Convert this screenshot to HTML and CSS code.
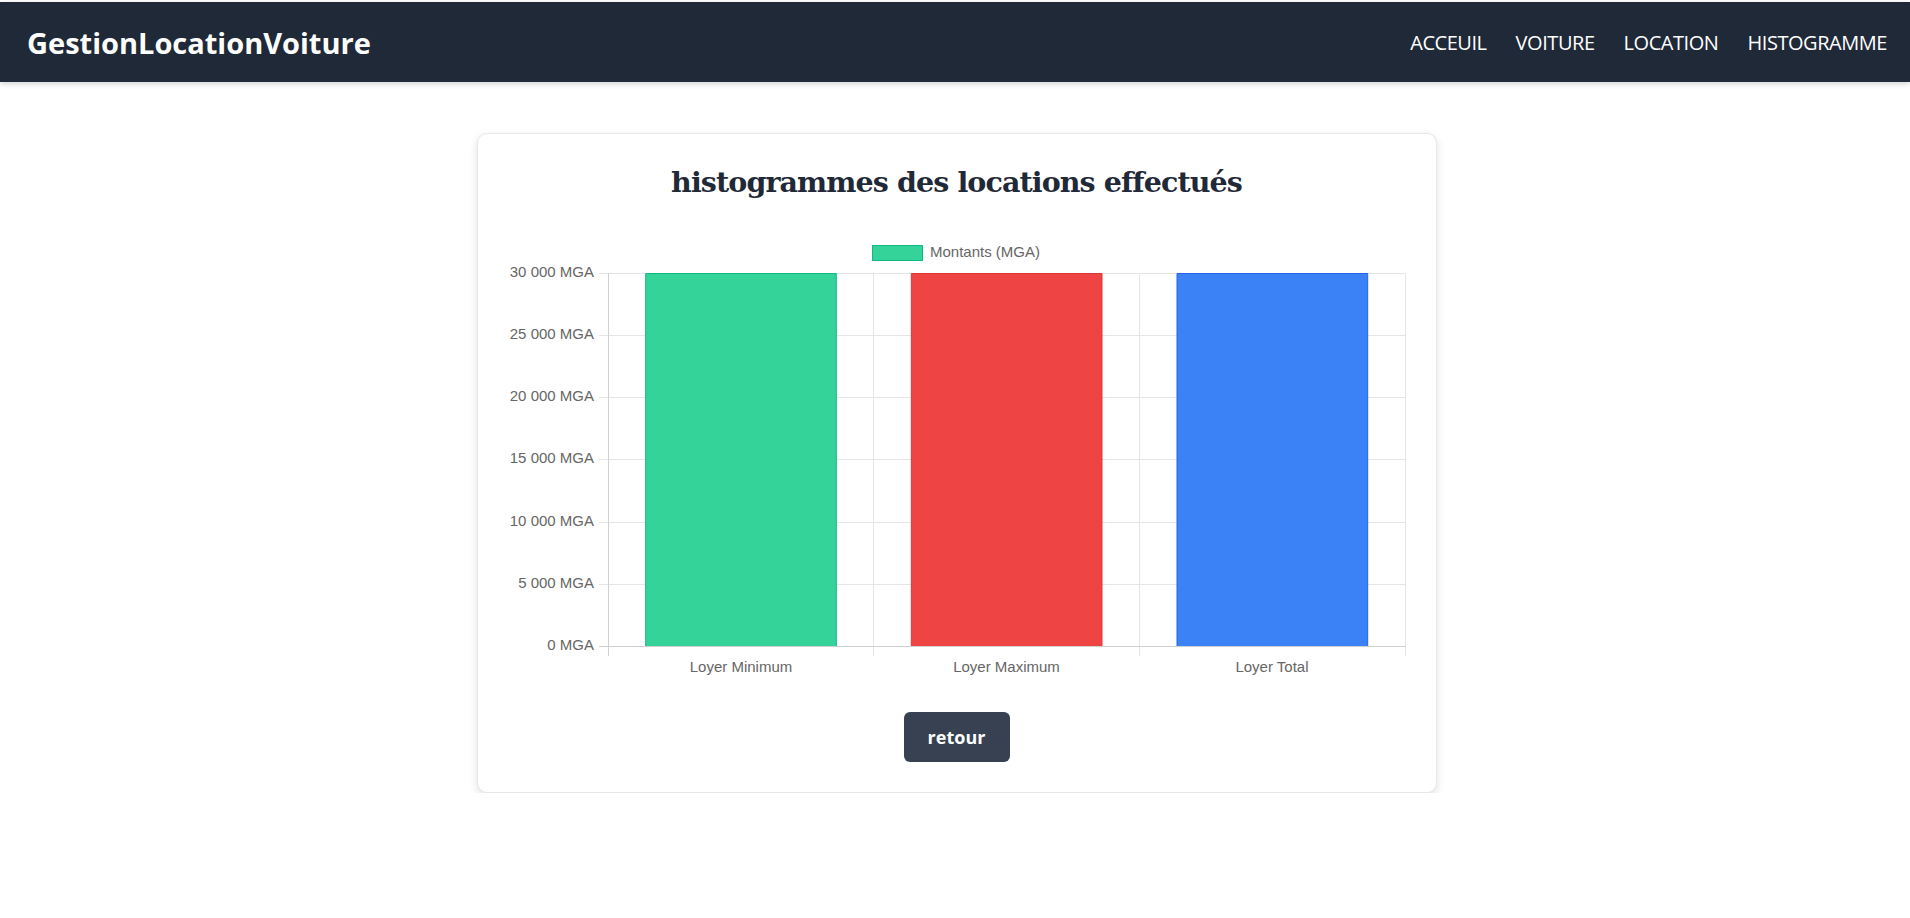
FILE: index.html
```html
<!DOCTYPE html>
<html lang="fr">
<head>
<meta charset="utf-8">
<title>GestionLocationVoiture</title>
<link rel="stylesheet" href="styles.css">
</head>
<body>
<header class="navbar">
  <div class="brand">GestionLocationVoiture</div>
  <nav class="nav-links">
    <a href="#" class="nav-link">ACCEUIL</a>
    <a href="#" class="nav-link">VOITURE</a>
    <a href="#" class="nav-link">LOCATION</a>
    <a href="#" class="nav-link">HISTOGRAMME</a>
  </nav>
</header>
<main class="main">
  <section class="card">
    <h2 class="card-title">histogrammes des locations effectués</h2>
    <div class="chart">
      <svg class="chart-svg" width="899" height="450" viewBox="0 0 899 450">
        <!-- legend -->
        <rect x="364.5" y="15.5" width="50" height="15" fill="#34d399" stroke="#10b981" stroke-width="1"/>
        <text class="chart-text" x="422" y="23" dominant-baseline="middle">Montants (MGA)</text>
        <!-- grid -->
        <g stroke="#e5e5e5" stroke-width="1">
          <line x1="91" y1="43.5" x2="898" y2="43.5"/>
          <line x1="91" y1="105.5" x2="898" y2="105.5"/>
          <line x1="91" y1="167.5" x2="898" y2="167.5"/>
          <line x1="91" y1="229.5" x2="898" y2="229.5"/>
          <line x1="91" y1="292.5" x2="898" y2="292.5"/>
          <line x1="91" y1="354.5" x2="898" y2="354.5"/>
          <line x1="365.5" y1="43" x2="365.5" y2="426"/>
          <line x1="631.5" y1="43" x2="631.5" y2="426"/>
          <line x1="897.5" y1="43" x2="897.5" y2="426"/>
        </g>
        <g stroke="#d0d0d0" stroke-width="1">
          <line x1="91" y1="416.5" x2="898" y2="416.5"/>
          <line x1="100.5" y1="43" x2="100.5" y2="426"/>
        </g>
        <!-- bars -->
        <path d="M137.7 416 V43.5 H328.3 V416" fill="#34d399" stroke="#10b981" stroke-width="1"/>
        <path d="M403.3 416 V43.5 H594 V416" fill="#ef4444" stroke="#dc3838" stroke-width="1"/>
        <path d="M669 416 V43.5 H859.7 V416" fill="#3b82f6" stroke="#2563eb" stroke-width="1"/>
        <!-- y labels -->
        <g class="chart-text" text-anchor="end" dominant-baseline="middle">
          <text x="86" y="43">30 000 MGA</text>
          <text x="86" y="105">25 000 MGA</text>
          <text x="86" y="167">20 000 MGA</text>
          <text x="86" y="229">15 000 MGA</text>
          <text x="86" y="292">10 000 MGA</text>
          <text x="86" y="354">5 000 MGA</text>
          <text x="86" y="416">0 MGA</text>
        </g>
        <!-- x labels -->
        <g class="chart-text" text-anchor="middle" dominant-baseline="middle">
          <text x="233" y="438">Loyer Minimum</text>
          <text x="498.5" y="438">Loyer Maximum</text>
          <text x="764" y="438">Loyer Total</text>
        </g>
      </svg>
    </div>
    <div class="actions">
      <a href="#" class="btn">retour</a>
    </div>
  </section>
</main>
</body>
</html>
```
FILE: styles.css
```css
* { box-sizing: border-box; }
html, body { margin: 0; padding: 0; background: #ffffff; }
body { font-family: "Open Sans", "Noto Sans", sans-serif; }

.navbar {
  margin-top: 2px;
  height: 80px;
  background: #1f2937;
  display: flex;
  align-items: center;
  justify-content: space-between;
  padding: 0 23px 0 27px;
  box-shadow: 0 2px 6px rgba(0, 0, 0, 0.18);
}
.brand {
  color: #ffffff;
  font-weight: 700;
  font-size: 29px;
  letter-spacing: 0;
}
.nav-links {
  display: flex;
  gap: 29px;
}
.nav-link {
  color: #ffffff;
  text-decoration: none;
  font-size: 20px;
  letter-spacing: -0.45px;
}

.main {
  display: flex;
  justify-content: center;
  padding: 51px 0 0 3px;
}
.card {
  width: 960px;
  background: #ffffff;
  border: 1px solid #e5e7eb;
  border-radius: 10px;
  box-shadow: 0 3px 8px rgba(0, 0, 0, 0.12);
  padding: 30px;
  display: flex;
  flex-direction: column;
}
.card-title {
  margin: 0 0 30px;
  text-align: center;
  font-family: "DejaVu Serif", "Liberation Serif", serif;
  font-weight: 700;
  font-size: 28.5px;
  line-height: 36px;
  letter-spacing: -0.9px;
  color: #1f2937;
}
.chart { height: 450px; }
.chart-svg { display: block; }
.chart-text {
  font-family: "Liberation Sans", Arial, sans-serif;
  font-size: 15px;
  fill: #666666;
}
.actions {
  display: flex;
  justify-content: center;
  margin-top: 32px;
}
.btn {
  display: flex;
  align-items: center;
  justify-content: center;
  width: 106px;
  height: 50px;
  background: #374151;
  color: #ffffff;
  border-radius: 6px;
  font-weight: 700;
  font-size: 18px;
  text-decoration: none;
}
```
